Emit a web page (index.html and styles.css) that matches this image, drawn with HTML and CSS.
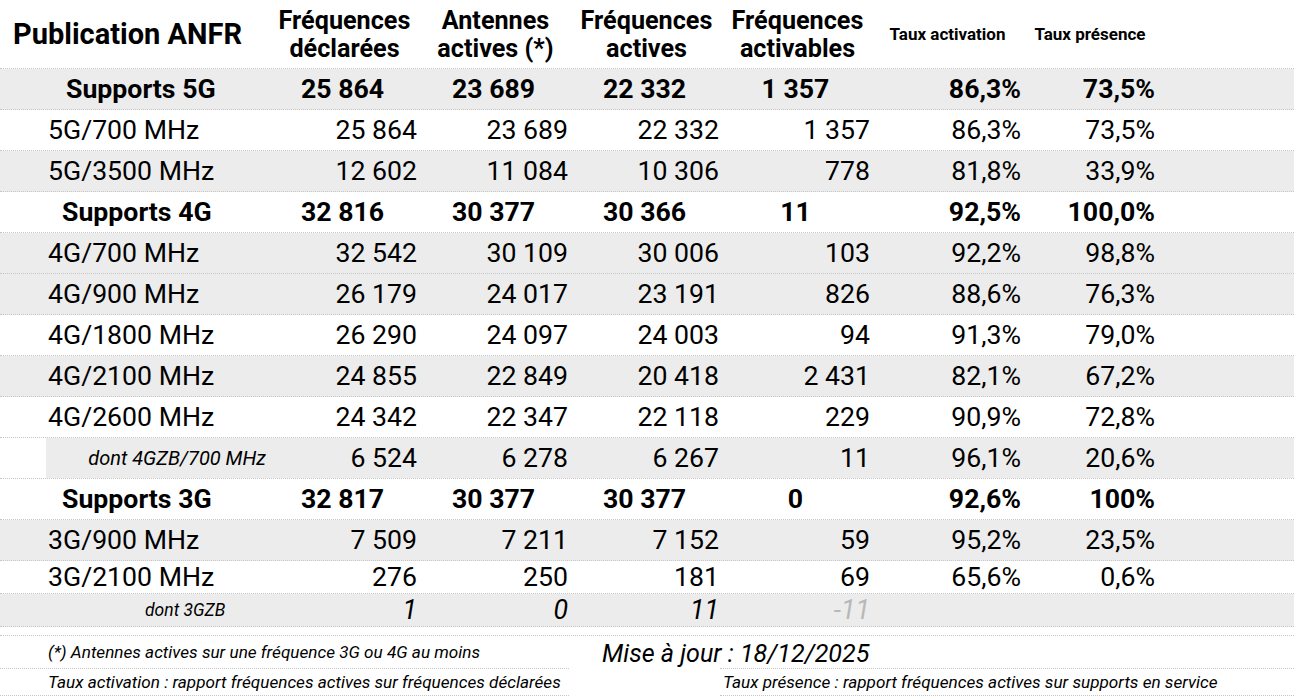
FILE: index.html
```html
<!DOCTYPE html>
<html lang="fr">
<head>
<meta charset="utf-8">
<title>Publication ANFR</title>
<link rel="stylesheet" href="styles.css">
</head>
<body>
<div class="table">
  <div class="row head">
    <div class="title">Publication ANFR</div>
    <div class="hcol">Fréquences<br>déclarées</div>
    <div class="hcol">Antennes<br>actives (*)</div>
    <div class="hcol">Fréquences<br>actives</div>
    <div class="hcol">Fréquences<br>activables</div>
    <div class="hsmall">Taux activation</div>
    <div class="hsmall">Taux présence</div>
  </div>

  <div class="row sup gray">
    <div class="lab sup5">Supports 5G</div>
    <div class="c">25 864</div><div class="c">23 689</div><div class="c">22 332</div><div class="c">1 357</div>
    <div class="n">86,3%</div><div class="n">73,5%</div>
  </div>
  <div class="row">
    <div class="lab">5G/700 MHz</div>
    <div class="n">25 864</div><div class="n">23 689</div><div class="n">22 332</div><div class="n">1 357</div>
    <div class="n">86,3%</div><div class="n">73,5%</div>
  </div>
  <div class="row gray">
    <div class="lab">5G/3500 MHz</div>
    <div class="n">12 602</div><div class="n">11 084</div><div class="n">10 306</div><div class="n">778</div>
    <div class="n">81,8%</div><div class="n">33,9%</div>
  </div>

  <div class="row sup">
    <div class="lab">Supports 4G</div>
    <div class="c">32 816</div><div class="c">30 377</div><div class="c">30 366</div><div class="c">11</div>
    <div class="n">92,5%</div><div class="n">100,0%</div>
  </div>
  <div class="row gray">
    <div class="lab">4G/700 MHz</div>
    <div class="n">32 542</div><div class="n">30 109</div><div class="n">30 006</div><div class="n">103</div>
    <div class="n">92,2%</div><div class="n">98,8%</div>
  </div>
  <div class="row gray">
    <div class="lab">4G/900 MHz</div>
    <div class="n">26 179</div><div class="n">24 017</div><div class="n">23 191</div><div class="n">826</div>
    <div class="n">88,6%</div><div class="n">76,3%</div>
  </div>
  <div class="row">
    <div class="lab">4G/1800 MHz</div>
    <div class="n">26 290</div><div class="n">24 097</div><div class="n">24 003</div><div class="n">94</div>
    <div class="n">91,3%</div><div class="n">79,0%</div>
  </div>
  <div class="row gray">
    <div class="lab">4G/2100 MHz</div>
    <div class="n">24 855</div><div class="n">22 849</div><div class="n">20 418</div><div class="n">2 431</div>
    <div class="n">82,1%</div><div class="n">67,2%</div>
  </div>
  <div class="row">
    <div class="lab">4G/2600 MHz</div>
    <div class="n">24 342</div><div class="n">22 347</div><div class="n">22 118</div><div class="n">229</div>
    <div class="n">90,9%</div><div class="n">72,8%</div>
  </div>
  <div class="row zb4">
    <div class="lab dont4"><span class="inset">dont 4GZB/700 MHz</span></div>
    <div class="n g">6 524</div><div class="n g">6 278</div><div class="n g">6 267</div><div class="n g">11</div>
    <div class="n g">96,1%</div><div class="n g">20,6%</div><div class="g"></div>
  </div>

  <div class="row sup">
    <div class="lab">Supports 3G</div>
    <div class="c">32 817</div><div class="c">30 377</div><div class="c">30 377</div><div class="c">0</div>
    <div class="n">92,6%</div><div class="n">100%</div>
  </div>
  <div class="row gray">
    <div class="lab">3G/900 MHz</div>
    <div class="n">7 509</div><div class="n">7 211</div><div class="n">7 152</div><div class="n">59</div>
    <div class="n">95,2%</div><div class="n">23,5%</div>
  </div>
  <div class="row short">
    <div class="lab">3G/2100 MHz</div>
    <div class="n">276</div><div class="n">250</div><div class="n">181</div><div class="n">69</div>
    <div class="n">65,6%</div><div class="n">0,6%</div>
  </div>
  <div class="row short gray zb3">
    <div class="lab dont3">dont 3GZB</div>
    <div class="n it">1</div><div class="n it">0</div><div class="n it">11</div><div class="n it neg">-11</div>
    <div></div><div></div>
  </div>
  <div class="spacer"></div>

  <div class="foot">
    <div class="f1 fa">(*) Antennes actives sur une fréquence 3G ou 4G au moins</div>
    <div class="f1 fb"><span class="maj">Mise à jour : 18/12/2025</span></div>
    <div class="f1 fc"></div>
    <div class="f2 fa">Taux activation : rapport fréquences actives sur fréquences déclarées</div>
    <div class="f2 fb"></div>
    <div class="f2 fc">Taux présence : rapport fréquences actives sur supports en service</div>
  </div>
</div>
</body>
</html>
```

FILE: styles.css
```css
html, body {
  margin: 0;
  padding: 0;
  background: #ffffff;
}
body {
  font-family: Roboto, "Liberation Sans", Arial, sans-serif;
  color: #000000;
  width: 1294px;
  height: 697px;
  overflow: hidden;
}
.table {
  display: flex;
  flex-direction: column;
}
.row {
  display: grid;
  grid-template-columns: 270px 151px 151px 151px 151px 151px 134px 1fr;
  height: 41px;
  box-sizing: border-box;
  border-bottom: 1px dotted #c6c6c6;
  align-items: center;
  font-size: 26.67px;
  line-height: 1;
}
.row > div {
  white-space: nowrap;
}
.gray {
  background: #ececec;
}
.head {
  height: 69px;
  font-weight: 700;
}
.title {
  font-size: 29px;
  padding-left: 13px;
}
.hcol {
  font-size: 25.2px;
  line-height: 28.5px;
  text-align: center;
  padding-left: 2px;
  padding-right: 4px;
  padding-top: 2px;
}
.hsmall {
  font-size: 17px;
  text-align: center;
  padding-right: 4px;
  padding-top: 1px;
}
.lab {
  padding-left: 48px;
}
.sup {
  font-weight: 700;
}
.sup .lab {
  padding-left: 62px;
}
.sup .lab.sup5 {
  padding-left: 66px;
}
.n {
  text-align: right;
  padding-right: 4px;
}
.c {
  text-align: center;
  padding-right: 6px;
}
.zb4 {
  align-items: stretch;
}
.zb4 > div {
  display: flex;
  align-items: center;
}
.zb4 > .n {
  justify-content: flex-end;
}
.g {
  background: #ececec;
}
.dont4 {
  padding-left: 46px;
}
.inset {
  background: #ececec;
  flex: 1;
  height: 100%;
  display: flex;
  align-items: center;
  justify-content: flex-end;
  padding-right: 4px;
  font-style: italic;
  font-size: 20px;
}
.short {
  height: 33px;
}
.dont3 {
  padding-left: 145px;
  font-style: italic;
  font-size: 17.5px;
  padding-top: 2px;
}
.it {
  font-style: italic;
}
.neg {
  color: #b8b8b8;
}
.spacer {
  height: 9px;
  box-sizing: border-box;
  border-bottom: 1px dotted #c6c6c6;
}
.foot {
  display: grid;
  grid-template-columns: 569px 151px 1fr;
  grid-template-rows: 33px 27px;
  font-style: italic;
}
.foot > div {
  box-sizing: border-box;
  display: flex;
  align-items: center;
  white-space: nowrap;
}
.fa {
  padding-left: 48px;
  font-size: 17.15px;
  border-bottom: 1px dotted #c6c6c6;
}
.f1.fc {
  border-bottom: 1px dotted #c6c6c6;
}
.f2.fc {
  padding-left: 3px;
  font-size: 17.15px;
  border-bottom: 1px dotted #c6c6c6;
}
.fb {
  overflow: visible;
}
.maj {
  font-size: 25.1px;
  padding-left: 33px;
  position: relative;
  top: 1px;
}
```
